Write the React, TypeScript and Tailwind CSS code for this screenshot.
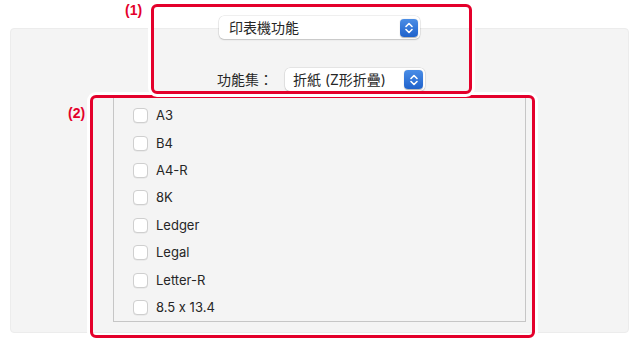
import React from "react";

const Stepper = ({ size }: { size: number }) => (
  <div
    className="flex items-center justify-center rounded-[4px] bg-gradient-to-b from-[#4a8de6] to-[#1f62cb] shadow-[0_0.5px_1px_rgba(0,0,0,0.3)]"
    style={{ width: size, height: size }}
  >
    <svg width="12" height="14" viewBox="0 0 12 14" fill="none">
      <path d="M3 5.5 L6 2.5 L9 5.5" stroke="white" strokeWidth="1.6" strokeLinecap="round" strokeLinejoin="round" />
      <path d="M3 8.5 L6 11.5 L9 8.5" stroke="white" strokeWidth="1.6" strokeLinecap="round" strokeLinejoin="round" />
    </svg>
  </div>
);

const items = ["A3", "B4", "A4-R", "8K", "Ledger", "Legal", "Letter-R", "8.5 x 13.4"];

export default function App() {
  return (
    <div
      className="relative w-[643px] h-[343px] overflow-hidden bg-white text-[#262626]"
      style={{ fontFamily: 'Inter, "Noto Sans CJK TC", "Liberation Sans", sans-serif', fontFeatureSettings: '"calt" 0' }}
    >
      <div className="pt-[16px]">
        <div className="relative z-10 ml-[219px] flex h-[23px] w-[201px] items-center justify-between rounded-[5px] bg-white pl-[10px] pr-[2px] shadow-[0_0_0_0.5px_rgba(0,0,0,0.12),0_1px_1.5px_rgba(0,0,0,0.15)]">
          <span className="text-[14px] leading-none">印表機功能</span>
          <Stepper size={18} />
        </div>
        <div className="ml-[10px] mr-[14px] -mt-[11px] h-[305px] rounded-[4px] border border-[#ececec] bg-[#f4f4f4] pt-[39px]">
          <div className="flex h-[23px] items-center pl-[206px]">
            <span className="w-[68px] text-[14px] leading-none">功能集：</span>
            <div className="flex h-[23px] w-[140px] items-center justify-between rounded-[5px] bg-white pl-[8px] pr-[2px] shadow-[0_0_0_0.5px_rgba(0,0,0,0.12),0_1px_1.5px_rgba(0,0,0,0.15)]">
              <span className="text-[14px] leading-none">折紙 (Z形折疊)</span>
              <Stepper size={19} />
            </div>
          </div>
          <div className="mx-[102px] mt-[6px] h-[225px] border-x border-b border-[#c6c6c6] bg-[#f4f4f4] pl-[19px] pt-[5px]">
            {items.map((t) => (
              <div key={t} className="flex h-[27.4px] items-center gap-[8px]">
                <div className="h-[15px] w-[15px] rounded-[4px] border border-[#cfcfcf] bg-white shadow-[0_0.5px_0.5px_rgba(0,0,0,0.08)]" />
                <span className="text-[13px] leading-none">{t}</span>
              </div>
            ))}
          </div>
        </div>
      </div>

      <div className="absolute left-[90px] top-[95px] h-[243px] w-[445px] rounded-[6px] border-[3px] border-[#e4002b] shadow-[0_0_0_3px_#ffffff]" />
      <div className="absolute left-[151px] top-[4px] h-[90px] w-[321px] rounded-[6px] border-[3px] border-[#e4002b] shadow-[0_0_0_3px_#ffffff]" />
      <div
        className="absolute left-[125px] top-[3px] text-[14px] font-bold leading-none text-[#e4002b]"
        style={{ fontFamily: '"Liberation Sans", Arial, sans-serif' }}
      >
        (1)
      </div>
      <div
        className="absolute left-[68px] top-[106px] text-[14px] font-bold leading-none text-[#e4002b]"
        style={{ fontFamily: '"Liberation Sans", Arial, sans-serif' }}
      >
        (2)
      </div>
    </div>
  );
}
